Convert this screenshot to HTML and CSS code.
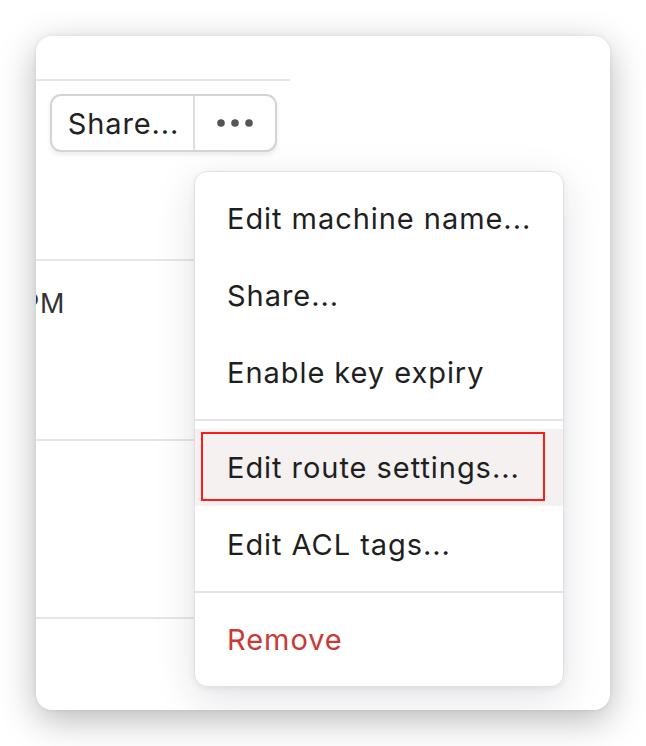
FILE: index.html
```html
<!DOCTYPE html>
<html>
<head>
<meta charset="utf-8">
<link rel="stylesheet" href="styles.css">
</head>
<body>
<div class="card">
  <div class="card-head"></div>
  <div class="toolbar">
    <div class="btn-group">
      <button class="btn btn-share">Share...</button>
      <button class="btn btn-more" aria-label="More">
        <svg width="36" height="8" viewBox="0 0 36 8"><circle cx="4" cy="4" r="3.8" fill="#555"/><circle cx="18" cy="4" r="3.8" fill="#555"/><circle cx="32" cy="4" r="3.8" fill="#555"/></svg>
      </button>
    </div>
  </div>
  <div class="rows">
    <div class="row row-first"></div>
    <div class="row row-second"><span class="time">PM</span></div>
    <div class="row row-third"></div>
    <div class="row"></div>
  </div>
  <div class="menu">
    <div class="item">Edit machine name...</div>
    <div class="item">Share...</div>
    <div class="item">Enable key expiry</div>
    <div class="sep"></div>
    <div class="item item-active">Edit route settings...<span class="focus-ring"></span></div>
    <div class="item">Edit ACL tags...</div>
    <div class="sep"></div>
    <div class="item item-danger">Remove</div>
  </div>
</div>
</body>
</html>
```
FILE: styles.css
```css
html, body {
  margin: 0;
  padding: 0;
  background: #ffffff;
}
body {
  font-family: Inter, "Noto Sans", sans-serif;
  color: #1f1f1f;
  padding: 36px;
  width: 574px;
}
.card {
  position: relative;
  width: 574px;
  height: 674px;
  background: #ffffff;
  border-radius: 16px;
  box-shadow: 0 10px 36px rgba(0, 0, 0, 0.28), 0 0 4px rgba(0, 0, 0, 0.08);
  overflow: hidden;
}
.card-head {
  height: 43px;
  width: 254px;
  border-bottom: 2px solid #e9e5e6;
}
.toolbar {
  padding: 13px 0 0 14px;
  height: 93px;
}
.btn-group {
  display: inline-flex;
  height: 58px;
  border: 2px solid #d8d2d3;
  border-radius: 11px;
  box-sizing: border-box;
  background: #fff;
  box-shadow: 0 3px 5px rgba(0, 0, 0, 0.08);
  overflow: hidden;
}
.btn {
  border: 0;
  background: transparent;
  font-family: Inter, "Noto Sans", sans-serif;
  font-size: 29px;
  color: #222;
  padding: 0;
  margin: 0;
  display: flex;
  align-items: center;
  justify-content: center;
}
.btn-share {
  width: 143px;
  border-right: 2px solid #e2dddd;
  letter-spacing: 0.9px;
  padding-left: 2px;
}
.btn-more {
  width: 80px;
}
.rows {
  width: 254px;
}
.row {
  height: 178px;
  border-bottom: 2px solid #e9e5e6;
}
.row-first {
  height: 72px;
}
.row-second {
  height: 178px;
}
.row-third {
  height: 176px;
}
.time {
  display: block;
  padding-top: 26px;
  margin-left: -14px;
  font-size: 27px;
  letter-spacing: 0.8px;
  color: #333;
}
.menu {
  position: absolute;
  left: 158px;
  top: 135px;
  width: 370px;
  box-sizing: border-box;
  padding: 8px 0;
  background: #fff;
  border: 1px solid #e3e0e3;
  border-radius: 13px;
  box-shadow: 0 12px 40px rgba(40, 30, 60, 0.13), 0 2px 6px rgba(0, 0, 0, 0.06);
}
.item {
  position: relative;
  height: 77px;
  display: flex;
  align-items: center;
  padding-left: 32px;
  font-size: 29px;
  letter-spacing: 0.95px;
  color: #1f1f1f;
}
.item-active {
  background: #f4f1f0;
}
.item-danger {
  color: #c93a35;
}
.focus-ring {
  position: absolute;
  left: 6px;
  top: 3px;
  width: 344px;
  height: 69px;
  box-sizing: border-box;
  border: 2px solid #ff1a1a;
}
.sep {
  height: 2px;
  margin: 8px 0;
  background: #e6e3e5;
}
```
